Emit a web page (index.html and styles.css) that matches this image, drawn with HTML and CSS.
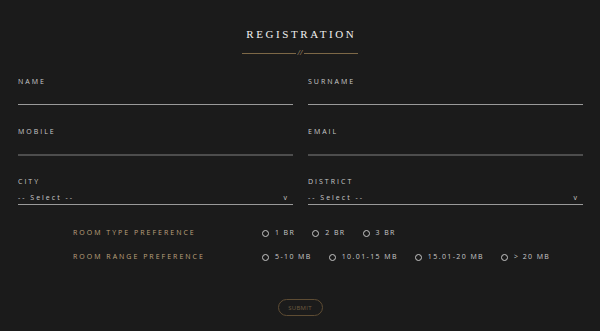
FILE: index.html
```html
<!DOCTYPE html>
<html lang="en">
<head>
  <meta charset="UTF-8">
  <title>Registration</title>
  <link rel="stylesheet" href="styles.css">
</head>
<body>
  <!-- Cabecera -->
  <div class="title">
    <h1>REGISTRATION</h1>
    <div class="divider"><span class="bar"></span><span class="slash">//</span><span class="bar"></span></div>
  </div>

  <form class="form">
    <div class="fields">
      <div class="field">
        <label>NAME</label>
        <div class="input"></div>
      </div>
      <div class="field">
        <label>SURNAME</label>
        <div class="input"></div>
      </div>
      <div class="field">
        <label>MOBILE</label>
        <div class="input dark"></div>
      </div>
      <div class="field">
        <label>EMAIL</label>
        <div class="input dark"></div>
      </div>
      <div class="field">
        <label>CITY</label>
        <div class="select"><span>-- Select --</span><span class="caret">v</span></div>
      </div>
      <div class="field">
        <label>DISTRICT</label>
        <div class="select"><span>-- Select --</span><span class="caret">v</span></div>
      </div>
    </div>

    <!-- Preferencias -->
    <div class="prefs">
      <div class="pref-label">ROOM TYPE PREFERENCE</div>
      <div class="options">
        <span class="opt"><i class="radio"></i>1 BR</span>
        <span class="opt"><i class="radio"></i>2 BR</span>
        <span class="opt"><i class="radio"></i>3 BR</span>
      </div>
      <div class="pref-label">ROOM RANGE PREFERENCE</div>
      <div class="options">
        <span class="opt"><i class="radio"></i>5-10 MB</span>
        <span class="opt"><i class="radio"></i>10.01-15 MB</span>
        <span class="opt"><i class="radio"></i>15.01-20 MB</span>
        <span class="opt"><i class="radio"></i>&gt; 20 MB</span>
      </div>
    </div>

    <div class="actions">
      <button type="button" class="submit">SUBMIT</button>
    </div>
  </form>
</body>
</html>
```

FILE: styles.css
```css
/* Estilo global */
html, body {
  margin: 0;
  background-color: #1b1b1b;
  color: #c4c4c4;
  font-family: 'Open Sans', sans-serif;
}
body {
  padding: 0 18px;
}

/* Titulo */
.title {
  text-align: center;
  padding-top: 28px;
}
.title h1 {
  margin: 0;
  font-family: 'Liberation Serif', serif;
  font-weight: normal;
  font-size: 11px;
  line-height: 12px;
  letter-spacing: 2.6px;
  color: #f0f0f0;
  padding-left: 2.6px;
}
.divider {
  display: flex;
  justify-content: center;
  align-items: center;
  gap: 2px;
  margin-top: 9px;
  height: 8px;
}
.divider .bar {
  width: 54px;
  height: 1px;
  background-color: #7d6847;
}
.divider .slash {
  font-size: 7px;
  line-height: 8px;
  color: #a08a66;
  font-style: italic;
}

/* Campos */
.fields {
  display: grid;
  grid-template-columns: 275px 275px;
  column-gap: 15px;
  margin-top: 21px;
}
.field {
  height: 50px;
}
.field label {
  display: block;
  font-size: 7px;
  line-height: 8px;
  letter-spacing: 2px;
  color: #cacaca;
}
.input {
  margin-top: 18px;
  height: 1px;
  background-color: #9a9a9a;
}
.input.dark {
  height: 2px;
  background-color: #4d4d4d;
}
.select {
  display: flex;
  justify-content: space-between;
  align-items: center;
  margin-top: 5px;
  height: 12px;
  padding-bottom: 1px;
  border-bottom: 1px solid #9a9a9a;
  font-size: 7px;
  letter-spacing: 2px;
  color: #cacaca;
}
.select .caret {
  padding-right: 6px;
  letter-spacing: 0;
  font-size: 7px;
}

/* Preferencias */
.prefs {
  display: grid;
  grid-template-columns: 189px auto;
  row-gap: 14px;
  margin-top: 0;
  padding-left: 55px;
  align-items: center;
}
.pref-label {
  font-size: 7px;
  line-height: 10px;
  letter-spacing: 2px;
  color: #bda37e;
}
.options {
  display: flex;
  gap: 17px;
}
.opt {
  display: flex;
  align-items: center;
  gap: 6px;
  font-size: 7px;
  line-height: 10px;
  letter-spacing: 1.4px;
  color: #cacaca;
}
.radio {
  width: 5px;
  height: 5px;
  border: 1px solid #c6c6c6;
  border-radius: 50%;
}

/* Boton */
.actions {
  display: flex;
  justify-content: center;
  margin-top: 37px;
}
.submit {
  width: 45px;
  height: 17px;
  padding: 0;
  border: 1px solid #5e4c33;
  border-radius: 9px;
  background: transparent;
  color: #6f5c40;
  font-family: 'Open Sans', sans-serif;
  font-size: 6px;
  letter-spacing: 0.3px;
  cursor: pointer;
}
```
